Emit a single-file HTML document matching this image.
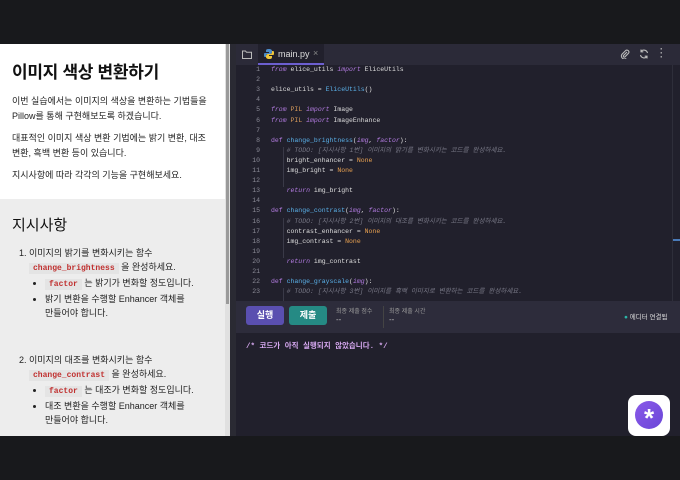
<!DOCTYPE html>
<html><head><meta charset="utf-8"><style>
*{margin:0;padding:0;box-sizing:border-box}
body{width:680px;height:480px;background:#18191c;position:relative;overflow:hidden;font-family:"Liberation Sans","Noto Sans CJK KR",sans-serif}
.left{position:absolute;left:0;top:44px;width:225px;height:392px;background:#ededed;overflow:hidden}
.top{background:#fff;padding:14px 12px 10px 12px;height:155px}
h1{font-size:17px;font-weight:bold;color:#111;margin-bottom:11px;letter-spacing:-0.3px}
p{font-size:9px;line-height:15px;color:#222;margin-bottom:7px}
h2{font-size:15px;font-weight:normal;color:#111;margin:15px 12px 11px}
ol{font-size:9px;color:#222;line-height:14px;padding-left:29px;padding-right:36px}
ol>li{margin-bottom:33px}
code{font-family:"Liberation Mono",monospace;font-size:8px;color:#c0302f;background:#e4e4e4;padding:1px 4px;font-weight:bold}
ul{list-style:disc;padding-left:16px}
ul li{margin:0}
ul li.nw{white-space:nowrap}
.sb{position:absolute;left:225px;top:44px;width:5px;height:392px;background:#e0e0e0}
.sb i{position:absolute;left:1px;top:0;width:3px;height:260px;background:#9a9a9a;display:block}
.div{position:absolute;left:230px;top:44px;width:6px;height:392px;background:#2a2a33}
.ed{position:absolute;left:236px;top:44px;width:444px;height:392px;background:#21202c}
.tabs{height:21px;background:#2b2a38;position:relative;font-size:9px;color:#ddd}
.tab{position:absolute;left:22px;top:0;width:66px;height:21px;background:#21202c;border-bottom:2px solid #6c5fd0}
.code{position:absolute;top:21px;left:0;width:436px;height:236px;font-family:"Liberation Mono","Noto Sans CJK KR",monospace;font-size:6.5px;color:#ddd}
.ln,.cl{position:absolute;height:10px;line-height:10px;overflow:visible}
.ln{left:0;width:24px;text-align:right;color:#8a8a96}
.cl{left:35px;white-space:pre}
.k{color:#b27be0;font-style:italic}.d{color:#b27be0}.f{color:#5ab0e8}.n{color:#e8a050}.c{color:#777785;font-style:italic}.p{color:#d89a5a}
.tb{position:absolute;top:257px;left:0;width:444px;height:32px;background:#2d2c3b}
.btn{position:absolute;top:5px;width:38px;height:19px;border-radius:3px;color:#fff;font-size:9px;text-align:center;line-height:19px;font-weight:bold}
.out{position:absolute;top:289px;left:0;width:444px;height:103px;background:#21202c;font-family:"Liberation Mono","Noto Sans CJK KR",monospace;font-size:7.5px;color:#d6a8f0;padding:7px 10px;font-weight:bold}
.fab{position:absolute;left:628px;top:395px;width:42px;height:41px;background:#fff;border-radius:8px}
.fab i{position:absolute;left:7px;top:6px;width:28px;height:28px;border-radius:50%;background:linear-gradient(135deg,#8a5ae8,#6a46d8);color:#fff;font-style:normal;text-align:center;font-size:26px;line-height:34px;font-weight:bold}
</style></head><body>
<div class="left">
<div class="top">
<h1>이미지 색상 변환하기</h1>
<p>이번 실습에서는 이미지의 색상을 변환하는 기법들을 Pillow를 통해 구현해보도록 하겠습니다.</p>
<p>대표적인 이미지 색상 변환 기법에는 밝기 변환, 대조 변환, 흑백 변환 등이 있습니다.</p>
<p>지시사항에 따라 각각의 기능을 구현해보세요.</p>
</div>
<h2>지시사항</h2>
<ol>
<li>이미지의 밝기를 변화시키는 함수<br><code>change_brightness</code> 을 완성하세요.
<ul><li class="nw"><code>factor</code> 는 밝기가 변화할 정도입니다.</li><li>밝기 변환을 수행할 Enhancer 객체를 만들어야 합니다.</li></ul></li>
<li>이미지의 대조를 변화시키는 함수<br><code>change_contrast</code> 을 완성하세요.
<ul><li class="nw"><code>factor</code> 는 대조가 변화할 정도입니다.</li><li>대조 변환을 수행할 Enhancer 객체를 만들어야 합니다.</li></ul></li>
</ol>
</div>
<div class="sb"><i></i></div>
<div class="div"></div>
<div class="ed">
<div class="tabs">
<svg style="position:absolute;left:6px;top:6px" width="10" height="9" viewBox="0 0 10 9"><path d="M0.5 1h3l1 1.2h5v6.3h-9z" fill="none" stroke="#bbb"/></svg>
<div class="tab"><svg style="position:absolute;left:6px;top:5px" width="10" height="10" viewBox="0 0 10 10"><path d="M5 0C2 0 2 1 2 2v1h3v1H1C0 4 0 5 0 6s0 2 1 2h1V6.5C2 5.5 3 5 4 5h2c1 0 2-1 2-2V2C8 1 7 0 5 0z" fill="#4b8bc8"/><path d="M5 10c3 0 3-1 3-2V7H5V6h4c1 0 1-1 1-2s0-2-1-2H8v1.5C8 4.5 7 5 6 5H4C3 5 2 6 2 7v1c0 1 1 2 3 2z" fill="#f0c63a"/></svg><span style="position:absolute;left:20px;top:5px">main.py</span><span style="position:absolute;left:55px;top:4px;color:#888">×</span></div>
<svg style="position:absolute;left:384px;top:5px" width="10" height="10" viewBox="0 0 10 10"><path d="M7 3L3.5 6.5a1 1 0 0 0 1.4 1.4L8.5 4.3a2 2 0 0 0-2.8-2.8L2 5.2a3 3 0 0 0 4.2 4.2" fill="none" stroke="#bbb" stroke-width="1.1"/></svg>
<svg style="position:absolute;left:403px;top:5px" width="10" height="10" viewBox="0 0 10 10"><path d="M8.5 4A3.7 3.7 0 0 0 2 2.5M1.5 6A3.7 3.7 0 0 0 8 7.5M2 0.5v2.3h2.3M8 9.5V7.2H5.7" fill="none" stroke="#bbb" stroke-width="1.1"/></svg>
<span style="position:absolute;left:424px;top:3px;color:#bbb;font-weight:bold;font-size:9px;line-height:4px">·<br>·<br>·</span>
</div>
<div class="code">
<div style="position:absolute;left:47px;top:82px;width:1px;height:40px;background:#3a3a48"></div>
<div style="position:absolute;left:47px;top:153px;width:1px;height:40px;background:#3a3a48"></div>
<div style="position:absolute;left:47px;top:223px;width:1px;height:13px;background:#3a3a48"></div>
<div style="position:absolute;left:436px;top:174px;width:8px;height:2px;background:#4a7ab8"></div>
<div style="position:absolute;left:436px;top:0;width:1px;height:236px;background:#2e2e3a"></div>
<script>
var L=[
'<span class="k">from</span> elice_utils <span class="k">import</span> EliceUtils',
'',
'elice_utils = <span class="f">EliceUtils</span>()',
'',
'<span class="k">from</span> <span class="p">PIL</span> <span class="k">import</span> Image',
'<span class="k">from</span> <span class="p">PIL</span> <span class="k">import</span> ImageEnhance',
'',
'<span class="d">def</span> <span class="f">change_brightness</span>(<span class="k">img</span>, <span class="k">factor</span>):',
'    <span class="c"># TODO: [지시사항 1번] 이미지의 밝기를 변화시키는 코드를 완성하세요.</span>',
'    bright_enhancer = <span class="n">None</span>',
'    img_bright = <span class="n">None</span>',
'',
'    <span class="k">return</span> img_bright',
'',
'<span class="d">def</span> <span class="f">change_contrast</span>(<span class="k">img</span>, <span class="k">factor</span>):',
'    <span class="c"># TODO: [지시사항 2번] 이미지의 대조를 변화시키는 코드를 완성하세요.</span>',
'    contrast_enhancer = <span class="n">None</span>',
'    img_contrast = <span class="n">None</span>',
'',
'    <span class="k">return</span> img_contrast',
'',
'<span class="d">def</span> <span class="f">change_grayscale</span>(<span class="k">img</span>):',
'    <span class="c"># TODO: [지시사항 3번] 이미지를 흑백 이미지로 변환하는 코드를 완성하세요.</span>'];
var h='';for(var i=0;i<L.length;i++){var t=0+i*10.1;h+='<div class="ln" style="top:'+t+'px">'+(i+1)+'</div><div class="cl" style="top:'+t+'px">'+L[i]+'</div>';}
document.write(h);
</script>
</div>
<div class="tb">
<div class="btn" style="left:10px;background:#5a4fb0">실행</div>
<div class="btn" style="left:53px;background:#258a84">제출</div>
<div style="position:absolute;left:100px;top:5px;font-size:6px;color:#999">최종 제출 점수<br><span style="color:#bbb;font-size:8px">--</span></div>
<div style="position:absolute;left:147px;top:5px;width:1px;height:22px;background:#444"></div>
<div style="position:absolute;left:153px;top:5px;font-size:6px;color:#999">최종 제출 시간<br><span style="color:#bbb;font-size:8px">--</span></div>
<div style="position:absolute;left:388px;top:10px;font-size:6.5px;color:#ddd"><span style="color:#2bb5a8">●</span> 에디터 연결됨</div>
</div>
<div class="out">/* 코드가 아직 실행되지 않았습니다. */</div>
</div>
<div class="fab"><i>*</i></div>
</body></html>
